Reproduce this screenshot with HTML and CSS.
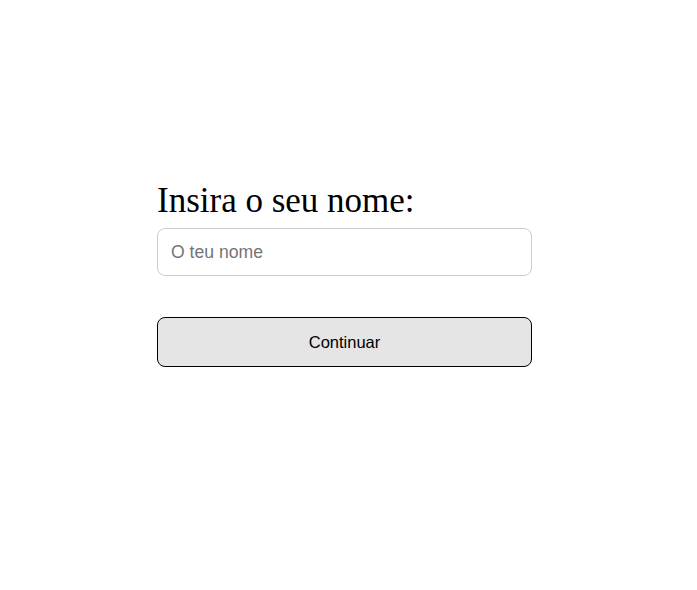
FILE: index.html
```html
<!DOCTYPE html>
<html lang="pt">
<head>
<meta charset="utf-8">
<title>Nome</title>
<link rel="stylesheet" href="styles.css">
</head>
<body>
<main class="page">
  <form class="card">
    <h1 class="title">Insira o seu nome:</h1>
    <input class="name-input" type="text" placeholder="O teu nome">
    <button class="continue" type="button">Continuar</button>
  </form>
</main>
</body>
</html>
```
FILE: styles.css
```css
html, body {
  margin: 0;
  padding: 0;
  background: #ffffff;
}
.page {
  padding-top: 181px;
  padding-left: 157px;
}
.card {
  width: 375px;
  display: flex;
  flex-direction: column;
}
.title {
  font-family: "Liberation Serif", "Times New Roman", serif;
  font-weight: normal;
  font-size: 35px;
  line-height: 40px;
  margin: 0 0 7px 0;
  color: #000;
}
.name-input {
  box-sizing: border-box;
  height: 48px;
  width: 100%;
  border: 1px solid #cccccc;
  border-radius: 8px;
  padding: 0 13px;
  font-family: "Liberation Sans", Arial, sans-serif;
  font-size: 17.6px;
  color: #000;
  outline: none;
}
.name-input::placeholder {
  color: #757575;
}
.continue {
  box-sizing: border-box;
  margin-top: 41px;
  height: 50px;
  width: 100%;
  background: #e5e5e5;
  border: 1px solid #000;
  border-radius: 8px;
  font-family: "Liberation Sans", Arial, sans-serif;
  font-size: 16.5px;
  color: #000;
  cursor: pointer;
}
```
